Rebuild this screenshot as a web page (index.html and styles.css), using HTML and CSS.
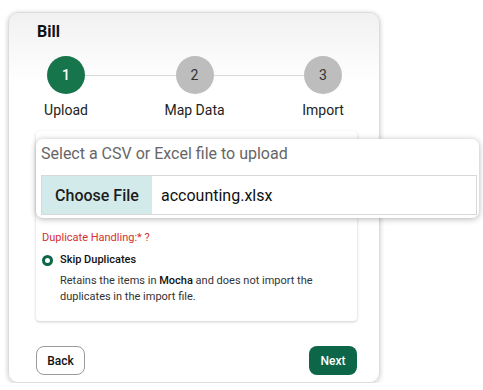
FILE: index.html
```html
<!DOCTYPE html>
<html lang="en">
<head>
    <meta charset="UTF-8">
    <title>Import Bill</title>
    <link rel="stylesheet" href="styles.css">
</head>
<body>
    <div class="import-card">
        <h2 class="title">Bill</h2>

        <!-- Steps -->
        <div class="stepper">
            <div class="step active">
                <span class="circle">1</span>
                <span class="label">Upload</span>
            </div>
            <div class="connector"></div>
            <div class="step">
                <span class="circle">2</span>
                <span class="label">Map Data</span>
            </div>
            <div class="connector"></div>
            <div class="step">
                <span class="circle">3</span>
                <span class="label">Import</span>
            </div>
        </div>

        <!-- Form -->
        <div class="form-card">
            <div class="upload-spacer"></div>
            <p class="dup-title">Duplicate Handling:* ?</p>
            <label class="option">
                <span class="radio"></span>
                <span class="option-name">Skip Duplicates</span>
            </label>
            <p class="option-desc">Retains the items in <b>Mocha</b> and does not import the duplicates in the import file.</p>
        </div>

        <div class="actions">
            <button class="btn btn-back">Back</button>
            <button class="btn btn-next">Next</button>
        </div>

        <!-- Zoomed upload field -->
        <div class="upload-popup">
            <p class="upload-hint">Select a CSV or Excel file to upload</p>
            <div class="file-input">
                <span class="choose">Choose File</span>
                <span class="file-name">accounting.xlsx</span>
            </div>
        </div>
    </div>
</body>
</html>
```

FILE: styles.css
```css
body {
    margin: 0;
    font-family: Roboto, "Liberation Sans", sans-serif;
    background-color: #fff;
    color: #222;
}
.import-card {
    position: relative;
    box-sizing: border-box;
    width: 372px;
    height: 371px;
    margin: 12px 0 0 8px;
    padding: 9px 22px 0 27px;
    border: 1px solid #dcdcdc;
    border-radius: 10px;
    background: linear-gradient(#f1f1f1, #fff 70px);
    box-shadow: 0 1px 5px rgba(0, 0, 0, 0.22);
}
.title {
    margin: 0 0 0 1px;
    font-size: 16px;
    line-height: 20px;
    font-weight: 700;
    color: #111;
}
.stepper {
    display: flex;
    align-items: flex-start;
    margin: 14px 15px 0 11px;
}
.step {
    display: flex;
    flex-direction: column;
    align-items: center;
    width: 38px;
}
.circle {
    display: flex;
    align-items: center;
    justify-content: center;
    width: 38px;
    height: 38px;
    border-radius: 50%;
    background-color: #bdbdbd;
    color: #333;
    font-size: 14px;
}
.step.active .circle {
    background-color: #17754b;
    color: #fff;
    font-weight: 500;
}
.label {
    margin-top: 7px;
    white-space: nowrap;
    font-size: 14px;
    line-height: 18px;
    color: #222;
}
.connector {
    flex: 1;
    height: 1px;
    margin-top: 19px;
    background-color: #d8d8d8;
}
.form-card {
    margin-top: 12px;
    padding: 0 10px 16px 6px;
    background-color: #fff;
    border-radius: 4px;
    box-shadow: 0 1px 3px rgba(0, 0, 0, 0.2);
}
.upload-spacer {
    height: 99px;
}
.dup-title {
    margin: 0;
    font-size: 11px;
    line-height: 16px;
    color: #d32f2f;
}
.option {
    display: flex;
    align-items: center;
    gap: 7px;
    margin-top: 6px;
}
.radio {
    box-sizing: border-box;
    width: 11px;
    height: 11px;
    border-radius: 50%;
    border: 3px solid #0d6647;
    background-color: #fff;
}
.option-name {
    font-size: 11px;
    line-height: 16px;
    font-weight: 500;
    color: #111;
}
.option-desc {
    margin: 5px 0 0 18px;
    font-size: 11px;
    line-height: 16px;
    color: #333;
}
.option-desc b {
    font-weight: 500;
    color: #111;
}
.actions {
    display: flex;
    justify-content: space-between;
    margin-top: 25px;
}
.btn {
    height: 29px;
    padding: 0;
    border-radius: 8px;
    font-family: inherit;
    font-size: 12px;
    font-weight: 500;
    cursor: pointer;
}
.btn-back {
    width: 49px;
    border: 1px solid #9a9a9a;
    background-color: #fff;
    color: #111;
}
.btn-next {
    width: 48px;
    border: none;
    background-color: #0d6647;
    color: #fff;
}
.upload-popup {
    position: absolute;
    left: 27px;
    top: 126px;
    box-sizing: border-box;
    width: 443px;
    height: 79px;
    padding: 5px 2px 0 5px;
    background-color: #fff;
    border-radius: 7px;
    box-shadow: 0 1px 6px rgba(0, 0, 0, 0.3);
}
.upload-hint {
    margin: 0;
    font-size: 16px;
    line-height: 20px;
    color: #666;
}
.file-input {
    display: flex;
    height: 38px;
    margin-top: 11px;
    border: 1px solid #d8d8d8;
}
.choose {
    display: flex;
    align-items: center;
    justify-content: center;
    width: 110px;
    background-color: #d3eaea;
    font-size: 16px;
    font-weight: 500;
    color: #1c1c1c;
}
.file-name {
    display: flex;
    align-items: center;
    padding-left: 9px;
    font-size: 16px;
    color: #111;
}
```
